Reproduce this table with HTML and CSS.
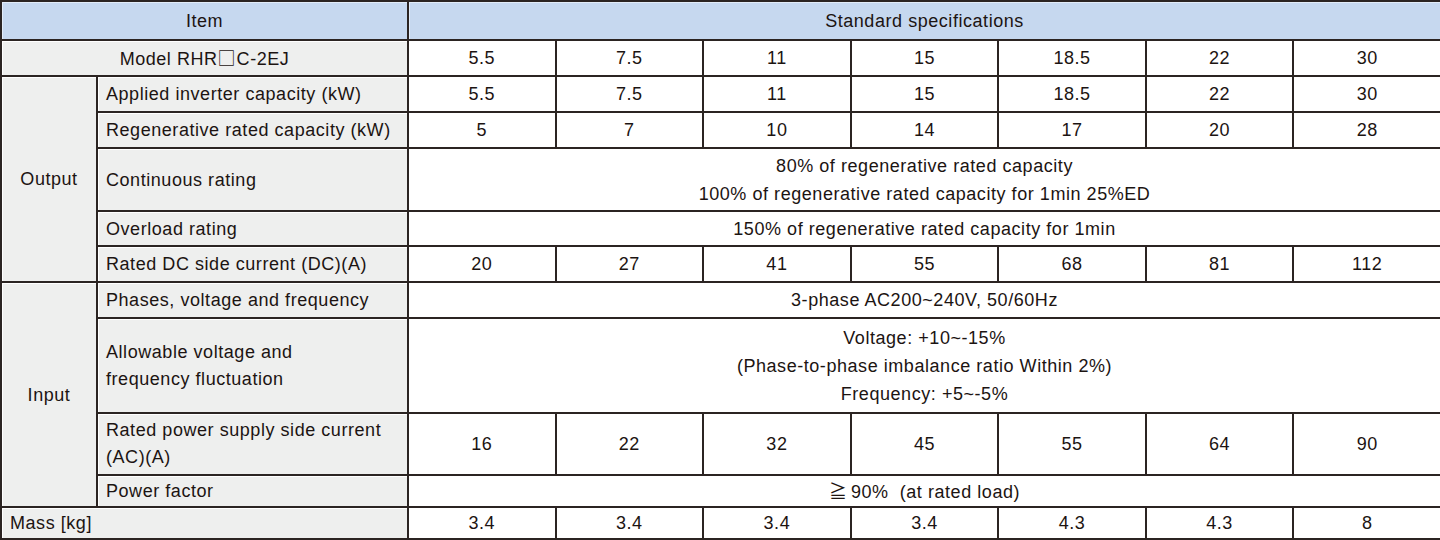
FILE: index.html
```html
<!DOCTYPE html>
<html lang="en">
<head>
<meta charset="utf-8">
<title>Standard specifications</title>
<link rel="stylesheet" href="styles.css">
</head>
<body>
<table class="spec">
  <colgroup>
    <col class="c-group">
    <col class="c-item">
    <col class="c-val"><col class="c-val"><col class="c-val"><col class="c-val"><col class="c-val"><col class="c-val"><col class="c-val">
  </colgroup>
  <tr class="r-head">
    <th colspan="2" class="head">Item</th>
    <th colspan="7" class="head">Standard specifications</th>
  </tr>
  <tr class="r-36">
    <th colspan="2" class="label center">Model RHR<span class="sym">□</span>C-2EJ</th>
    <td>5.5</td><td>7.5</td><td>11</td><td>15</td><td>18.5</td><td>22</td><td>30</td>
  </tr>
  <tr class="r-36">
    <th rowspan="5" class="label center">Output</th>
    <th class="label">Applied inverter capacity (kW)</th>
    <td>5.5</td><td>7.5</td><td>11</td><td>15</td><td>18.5</td><td>22</td><td>30</td>
  </tr>
  <tr class="r-36">
    <th class="label">Regenerative rated capacity (kW)</th>
    <td>5</td><td>7</td><td>10</td><td>14</td><td>17</td><td>20</td><td>28</td>
  </tr>
  <tr class="r-63">
    <th class="label">Continuous rating</th>
    <td colspan="7" class="multi">80% of regenerative rated capacity<br>100% of regenerative rated capacity for 1min 25%ED</td>
  </tr>
  <tr class="r-35">
    <th class="label">Overload rating</th>
    <td colspan="7">150% of regenerative rated capacity for 1min</td>
  </tr>
  <tr class="r-36">
    <th class="label">Rated DC side current (DC)(A)</th>
    <td>20</td><td>27</td><td>41</td><td>55</td><td>68</td><td>81</td><td>112</td>
  </tr>
  <tr class="r-36">
    <th rowspan="4" class="label center">Input</th>
    <th class="label">Phases, voltage and frequency</th>
    <td colspan="7">3-phase AC200~240V, 50/60Hz</td>
  </tr>
  <tr class="r-95">
    <th class="label multi">Allowable voltage and<br>frequency fluctuation</th>
    <td colspan="7" class="multi">Voltage: +10~-15%<br>(Phase-to-phase imbalance ratio Within 2%)<br>Frequency: +5~-5%</td>
  </tr>
  <tr class="r-62">
    <th class="label multi">Rated power supply side current<br>(AC)(A)</th>
    <td>16</td><td>22</td><td>32</td><td>45</td><td>55</td><td>64</td><td>90</td>
  </tr>
  <tr class="r-32">
    <th class="label">Power factor</th>
    <td colspan="7"><span class="sym gap">≧</span>90%&nbsp; (at rated load)</td>
  </tr>
  <tr class="r-last">
    <th colspan="2" class="label">Mass [kg]</th>
    <td>3.4</td><td>3.4</td><td>3.4</td><td>3.4</td><td>4.3</td><td>4.3</td><td>8</td>
  </tr>
</table>
</body>
</html>
```

FILE: styles.css
```css
html, body {
  margin: 0;
  padding: 0;
  background: #ffffff;
}

.spec {
  width: 1440px;
  table-layout: fixed;
  border-collapse: collapse;
  font-family: "Liberation Sans", Arial, "DejaVu Sans", sans-serif;
  font-size: 18px;
  letter-spacing: 0.55px;
  color: #1c1412;
}

.c-group { width: 96px; }
.c-item { width: 311px; }
.c-val { width: 147.57px; }

.spec th,
.spec td {
  border: 2px solid #2b2422;
  padding: 0 8px;
  text-align: center;
  vertical-align: middle;
  font-weight: normal;
  line-height: 28px;
  box-shadow: inset 1px 1px 0 #ffffff;
  white-space: nowrap;
}

.spec th.multi {
  line-height: 27px;
}

.spec th.head {
  background: #c6d8ef;
  box-shadow: inset 1px 1px 0 #e2ecf8;
}

.spec th.label {
  background: #eeefee;
  text-align: left;
}

.spec th.label.center {
  text-align: center;
}

.sym {
  font-family: "Noto Sans CJK JP", "DejaVu Sans", sans-serif;
  letter-spacing: 0;
  margin-right: 1px;
}

.sym.gap {
  margin-right: 4px;
}

.r-head { height: 39px; }
.r-36 { height: 36px; }
.r-35 { height: 35px; }
.r-63 { height: 63px; }
.r-95 { height: 95px; }
.r-62 { height: 62px; }
.r-32 { height: 32px; }
.r-last { height: 32px; }
```
